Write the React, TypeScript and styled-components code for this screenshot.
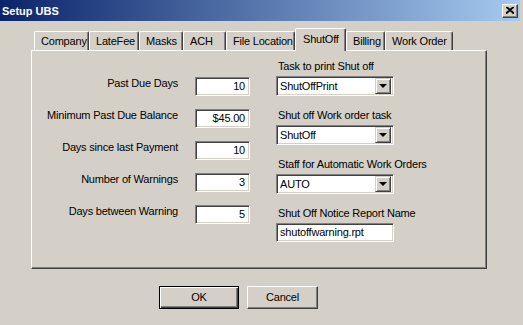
import React from 'react'
import styled, { createGlobalStyle } from 'styled-components';

const GlobalStyle = createGlobalStyle`
  html, body {
    margin: 0;
    padding: 0;
    background: #d4d0c8;
  }
  body {
    font-family: "Liberation Sans", Arial, sans-serif;
    font-size: 11px;
    letter-spacing: -0.2px;
    color: #000;
  }
`;

const Window = styled.div`
  width: 523px;
  height: 325px;
  background: #d4d0c8;
  display: flex;
  flex-direction: column;
  overflow: hidden;
`;

const TitleBar = styled.div`
  height: 21px;
  margin-right: 3px;
  background: linear-gradient(to right, #0a246a, #a6caf0);
  display: flex;
  align-items: center;
  justify-content: space-between;
  padding: 0 2px 0 2px;
`;

const Title = styled.span`
  color: #fff;
  font-weight: bold;
  font-size: 11px;
  letter-spacing: 0;
`;

const CloseButton = styled.div`
  width: 16px;
  height: 14px;
  box-sizing: border-box;
  background: #d4d0c8;
  border: 1px solid;
  border-color: #fff #404040 #404040 #fff;
  box-shadow: inset -1px -1px #808080;
  display: flex;
  align-items: center;
  justify-content: center;
`;

const Body = styled.div`
  padding: 7px 0 0 31px;
  display: flex;
  flex-direction: column;
`;

const TabStrip = styled.div`
  display: flex;
  align-items: flex-start;
  height: 22px;
  padding-left: 3px;
`;

const Tab = styled.div<{ $w: number; $active?: boolean }>`
  width: ${p => p.$w}px;
  box-sizing: border-box;
  height: ${p => (p.$active ? 23 : 19)}px;
  margin-top: ${p => (p.$active ? 0 : 3)}px;
  padding: ${p => (p.$active ? '4px 0 0 7px' : '3px 0 0 6px')};
  line-height: 13px;
  background: #d4d0c8;
  border-top: 1px solid #fff;
  border-left: 1px solid #fff;
  border-right: 1px solid #404040;
  border-top-left-radius: 2px;
  border-top-right-radius: 2px;
  box-shadow: inset -1px 0 #808080;
  white-space: nowrap;
  position: ${p => (p.$active ? 'relative' : 'static')};
  z-index: ${p => (p.$active ? 1 : 0)};
`;

const Panel = styled.div`
  width: 456px;
  height: 219px;
  box-sizing: border-box;
  border: 1px solid;
  border-color: #fff #404040 #404040 #fff;
  box-shadow: inset -1px -1px #808080;
  display: flex;
  gap: 26px;
`;

const LeftGrid = styled.div`
  display: grid;
  grid-template-columns: 146px 55px;
  column-gap: 17px;
  row-gap: 13px;
  align-content: start;
  align-items: start;
  padding-top: 26px;
`;

const Label = styled.div<{ $right?: boolean }>`
  line-height: 13px;
  white-space: nowrap;
  text-align: ${p => (p.$right ? 'right' : 'left')};
  padding-left: ${p => (p.$right ? 0 : 2)}px;
`;

const Field = styled.div<{ $align?: 'left' | 'right'; $w?: number }>`
  width: ${p => p.$w ?? 55}px;
  height: 19px;
  box-sizing: border-box;
  background: #fff;
  border: 1px solid;
  border-color: #808080 #fff #fff #808080;
  box-shadow: inset 1px 1px #404040, inset -1px -1px #d4d0c8;
  padding: ${p => (p.$align === 'left' ? '0 0 0 3px' : '0 4px 0 0')};
  text-align: ${p => p.$align ?? 'right'};
  line-height: 17px;
  white-space: nowrap;
`;

const RightCol = styled.div`
  display: flex;
  flex-direction: column;
  padding-top: 9px;
`;

const Group = styled.div`
  display: flex;
  flex-direction: column;
  gap: 3px;
  margin-bottom: 13px;
`;

const Select = styled.div`
  width: 118px;
  height: 20px;
  box-sizing: border-box;
  background: #fff;
  border: 1px solid;
  border-color: #808080 #fff #fff #808080;
  box-shadow: inset 1px 1px #404040, inset -1px -1px #d4d0c8;
  padding: 2px 2px 2px 3px;
  display: flex;
  align-items: center;
  justify-content: space-between;
`;

const DropButton = styled.div`
  width: 16px;
  height: 16px;
  box-sizing: border-box;
  background: #d4d0c8;
  border: 1px solid;
  border-color: #d4d0c8 #404040 #404040 #d4d0c8;
  box-shadow: inset 1px 1px #fff, inset -1px -1px #808080;
  display: flex;
  align-items: center;
  justify-content: center;
`;

const Arrow = styled.div`
  width: 0;
  height: 0;
  border-left: 4px solid transparent;
  border-right: 4px solid transparent;
  border-top: 4px solid #000;
`;

const ButtonRow = styled.div`
  display: flex;
  gap: 8px;
  padding: 17px 0 0 128px;
`;

const Button = styled.div<{ $w: number; $default?: boolean }>`
  width: ${p => p.$w}px;
  height: 23px;
  box-sizing: border-box;
  border: 1px solid;
  border-color: ${p => (p.$default ? '#000' : '#fff #404040 #404040 #fff')};
  box-shadow: ${p =>
    p.$default
      ? 'inset 1px 1px #fff, inset -1px -1px #404040, inset -2px -2px #808080'
      : 'inset -1px -1px #808080'};
  display: flex;
  align-items: center;
  justify-content: center;
  padding-bottom: 1px;
`;

const tabs = [
  { name: 'Company', w: 55 },
  { name: 'LateFee', w: 50 },
  { name: 'Masks', w: 44 },
  { name: 'ACH', w: 43 },
  { name: 'File Location', w: 69 },
  { name: 'ShutOff', w: 51 },
  { name: 'Billing', w: 39 },
  { name: 'Work Order', w: 68 },
];

const leftRows = [
  { label: 'Past Due Days', value: '10' },
  { label: 'Minimum Past Due Balance', value: '$45.00' },
  { label: 'Days since last Payment', value: '10' },
  { label: 'Number of Warnings', value: '3' },
  { label: 'Days between Warning', value: '5' },
];

const selects = [
  { label: 'Task to print Shut off', value: 'ShutOffPrint' },
  { label: 'Shut off Work order task', value: 'ShutOff' },
  { label: 'Staff for Automatic Work Orders', value: 'AUTO' },
];

export default function App() {
  return (
    <>
      <GlobalStyle />
      <Window>
        <TitleBar>
          <Title>Setup UBS</Title>
          <CloseButton>
            <svg width="8" height="7" viewBox="0 0 8 7">
              <path d="M0 0 L8 7 M8 0 L0 7 M1 0 L8 6 M7 0 L0 6" stroke="#000" strokeWidth="1.3" />
            </svg>
          </CloseButton>
        </TitleBar>
        <Body>
          <TabStrip>
            {tabs.map(t => (
              <Tab key={t.name} $w={t.w} $active={t.name === 'ShutOff'}>{t.name}</Tab>
            ))}
          </TabStrip>
          <Panel>
            <LeftGrid>
              {leftRows.map(r => (
                <React.Fragment key={r.label}>
                  <Label $right>{r.label}</Label>
                  <Field>{r.value}</Field>
                </React.Fragment>
              ))}
            </LeftGrid>
            <RightCol>
              {selects.map(s => (
                <Group key={s.label}>
                  <Label>{s.label}</Label>
                  <Select>
                    <span>{s.value}</span>
                    <DropButton><Arrow /></DropButton>
                  </Select>
                </Group>
              ))}
              <Group>
                <Label>Shut Off Notice Report Name</Label>
                <Field $align="left" $w={118}>shutoffwarning.rpt</Field>
              </Group>
            </RightCol>
          </Panel>
          <ButtonRow>
            <Button $w={80} $default>OK</Button>
            <Button $w={71}>Cancel</Button>
          </ButtonRow>
        </Body>
      </Window>
    </>
  )
}
